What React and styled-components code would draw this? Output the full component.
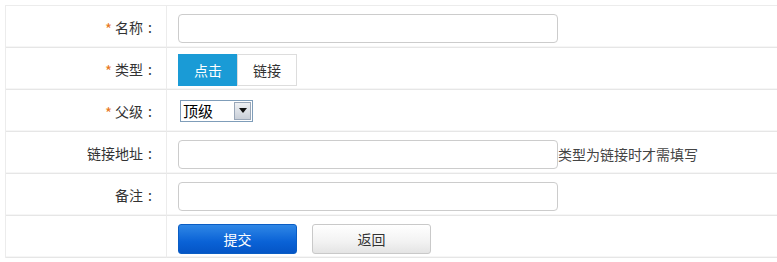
import React from "react";
import styled, { createGlobalStyle } from "styled-components";

const GlobalStyle = createGlobalStyle`
  body {
    margin: 0;
    background: #ffffff;
    font-family: "Noto Sans CJK SC", "Noto Sans", sans-serif;
    font-size: 14px;
    color: #333333;
  }
`;

const Page = styled.div`
  padding: 5px 0 0 5px;
  width: 777px;
  height: 262px;
  box-sizing: border-box;
  overflow: hidden;
`;

const FormTable = styled.div`
  width: 790px;
  display: grid;
  grid-template-columns: 161px 1fr;
  border-left: 1px solid #ececec;
  border-top: 1px solid #ececec;
`;

const LabelCell = styled.div`
  height: 41px;
  display: flex;
  align-items: center;
  justify-content: flex-end;
  padding-right: 14px;
  border-right: 1px solid #ececec;
  border-bottom: 1px solid #e6e6e6;
  box-shadow: inset 0 -3px 0 -2px #f6f6f6;
  color: #333333;
`;

const FieldCell = styled.div`
  height: 41px;
  display: flex;
  align-items: center;
  padding-left: 11px;
  border-bottom: 1px solid #e6e6e6;
  box-shadow: inset 0 -3px 0 -2px #f6f6f6;
`;

const Star = styled.span`
  color: #e8781d;
  margin-right: 3px;
  font-size: 15px;
  line-height: 1;
  transform: translateY(2px);
`;

const Colon = styled.span`
  margin-left: 5px;
`;

const TextInput = styled.input`
  width: 380px;
  height: 29px;
  margin-top: 3px;
  box-sizing: border-box;
  border: 1px solid #cccccc;
  border-radius: 4px;
  outline: none;
  padding: 0 6px;
  font: inherit;
`;

const Hint = styled.span`
  color: #444444;
  font-size: 14px;
  margin-top: 2px;
`;

const ToggleGroup = styled.div`
  display: flex;
  margin-top: 2px;
`;

const Toggle = styled.button`
  width: 60px;
  height: 32px;
  box-sizing: border-box;
  font: inherit;
  font-size: 14px;
  cursor: pointer;
  border: 1px solid ${(p) => (p.active ? "#1a9bd6" : "#dddddd")};
  background: ${(p) => (p.active ? "#1a9bd6" : "#ffffff")};
  color: ${(p) => (p.active ? "#ffffff" : "#333333")};
  margin-left: ${(p) => (p.active ? "0" : "-1px")};
`;

const SelectBox = styled.div`
  margin-left: 2px;
  width: 73px;
  height: 22px;
  box-sizing: border-box;
  border: 1px solid #7f9db9;
  display: flex;
  align-items: center;
  justify-content: space-between;
  padding: 1px;
  background: #ffffff;
  font-size: 15px;
  color: #000000;
`;

const SelectText = styled.span`
  padding-left: 1px;
  line-height: 18px;
`;

const SelectArrow = styled.span`
  width: 17px;
  height: 18px;
  box-sizing: border-box;
  border: 1px solid #9aa7b8;
  background: linear-gradient(#eef0f3, #c9cfd8);
  display: flex;
  align-items: center;
  justify-content: center;

  &::after {
    content: "";
    border-left: 4px solid transparent;
    border-right: 4px solid transparent;
    border-top: 5px solid #111111;
  }
`;

const ButtonRow = styled.div`
  display: flex;
  gap: 15px;
  padding-top: 4px;
`;

const ActionButton = styled.button`
  width: 119px;
  height: 30px;
  border-radius: 3px;
  font: inherit;
  font-size: 14px;
  cursor: pointer;
  border: 1px solid ${(p) => (p.primary ? "#0a5dc4" : "#c9c9c9")};
  color: ${(p) => (p.primary ? "#ffffff" : "#333333")};
  background: ${(p) =>
    p.primary
      ? "linear-gradient(#2f87e6, #0a62d6 60%, #0455c6)"
      : "linear-gradient(#ffffff, #f2f2f2 60%, #e4e4e4)"};
`;

const Label = ({ required, children }) => (
  <LabelCell>
    {required && <Star>*</Star>}
    {children}
    <Colon>:</Colon>
  </LabelCell>
);

const App = () => {
  return (
    <Page>
      <GlobalStyle />
      <FormTable>
        <Label required>名称</Label>
        <FieldCell>
          <TextInput />
        </FieldCell>

        <Label required>类型</Label>
        <FieldCell>
          <ToggleGroup>
            <Toggle active>点击</Toggle>
            <Toggle>链接</Toggle>
          </ToggleGroup>
        </FieldCell>

        <Label required>父级</Label>
        <FieldCell>
          <SelectBox>
            <SelectText>顶级</SelectText>
            <SelectArrow />
          </SelectBox>
        </FieldCell>

        <Label>链接地址</Label>
        <FieldCell>
          <TextInput />
          <Hint>类型为链接时才需填写</Hint>
        </FieldCell>

        <Label>备注</Label>
        <FieldCell>
          <TextInput />
        </FieldCell>

        <LabelCell />
        <FieldCell>
          <ButtonRow>
            <ActionButton primary>提交</ActionButton>
            <ActionButton>返回</ActionButton>
          </ButtonRow>
        </FieldCell>
      </FormTable>
    </Page>
  );
};

export default App;
